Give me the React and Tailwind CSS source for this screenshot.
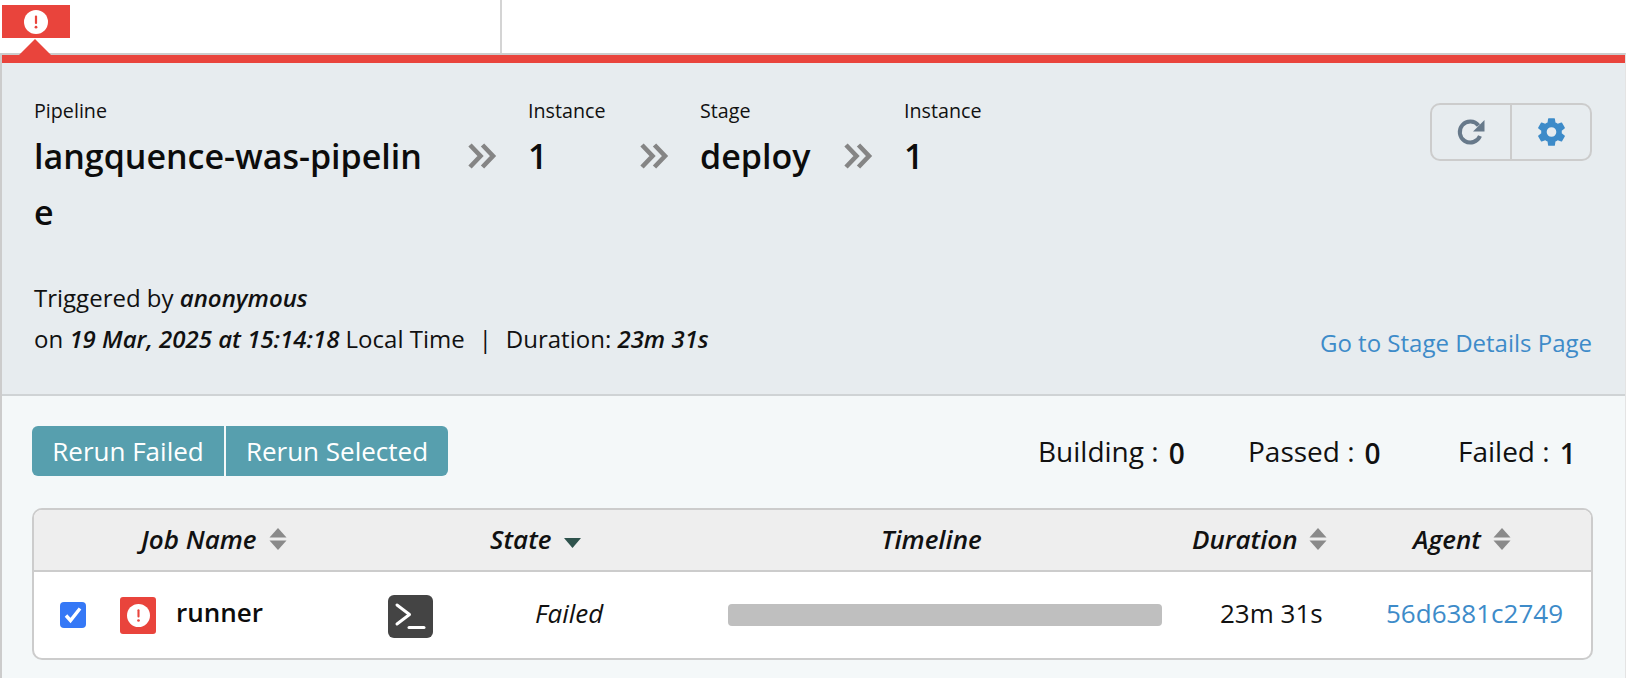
import React from "react";

const ErrorCircle = ({ size, fg = "#e9443c" }) => (
  <svg width={size} height={size} viewBox="0 0 24 24">
    <circle cx="12" cy="12" r="12" fill="#fff" />
    <rect x="10.9" y="5.5" width="2.2" height="8.500" rx="1" fill={fg} />
    <circle cx="12" cy="17.200" r="1.400" fill={fg} />
  </svg>
);

const Chevrons = () => (
  <svg width="30" height="28" viewBox="0 0 30 28" fill="none" stroke="#858585" strokeWidth="4.6">
    <path d="M3 3l10.500 11L3 25" />
    <path d="M15.500 3L26 14 15.500 25" />
  </svg>
);

const SortIcon = () => (
  <svg width="18" height="24" viewBox="0 0 18 24" fill="#8a8a8a">
    <path d="M9 1L17.500 10.500H.500z" />
    <path d="M.500 13.500h17L9 23z" />
  </svg>
);

const Crumb = ({ label, value, className }) => (
  <div className={className}>
    <div className="text-[19.700px] leading-[24px] text-[#111]">{label}</div>
    <div className="mt-[5px] text-[34px] leading-[56px] font-semibold text-[#0c0c0c] break-all">{value}</div>
  </div>
);

const Stat = ({ label, value, className }) => (
  <div className={`flex items-center ${className}`}>
    <span className="text-[28px]">{label} :</span>
    <span className="ml-[10px] mt-[3px] text-[28px] font-semibold">{value}</span>
  </div>
);

const App = () => {
  return (
    <div className="h-[678px] w-[1626px] overflow-hidden bg-white font-['Open_Sans',sans-serif] text-[#111]">
      {/* Top strip */}
      <div className="relative flex h-[53px] items-start">
        <div className="ml-[2px] mt-[5px] flex h-[33px] w-[68px] items-center justify-center bg-[#e9443c]">
          <ErrorCircle size={24} />
        </div>
        <div className="ml-[430px] h-[53px] w-[2px] bg-[#d4d4d4]"></div>
        <div className="absolute left-[19px] top-[39px] h-0 w-0 border-x-[16px] border-b-[16px] border-x-transparent border-b-[#e9443c]"></div>
      </div>

      {/* Panel */}
      <div className="h-[625px] border-l-2 border-r border-t-2 border-[#cccccc] border-r-[#e4e4e4]">
        <div className="h-[8px] bg-[#e9443c]"></div>

        <div className="flex h-[333px] flex-col border-b-2 border-[#cfd3d5] bg-[#e7ecef] pl-[32px] pr-[33px]">
          <div className="flex h-[214px] pt-[36px]">
            <Crumb label="Pipeline" value="langquence-was-pipeline" className="w-[390px]" />
            <div className="ml-[43px] mt-[43px] w-[61px]"><Chevrons /></div>
            <Crumb label="Instance" value="1" className="w-[111px]" />
            <div className="mt-[43px] w-[61px]"><Chevrons /></div>
            <Crumb label="Stage" value="deploy" className="w-[143px]" />
            <div className="mt-[43px] w-[61px]"><Chevrons /></div>
            <Crumb label="Instance" value="1" />
            <div className="ml-auto mt-[4px] flex h-[58px] w-[162px] rounded-[10px] border-2 border-[#cccccc]">
              <div className="flex w-[80px] items-center justify-center border-r-2 border-[#cccccc]">
                <svg width="28" height="28" viewBox="0 0 28 28" fill="none">
                  <path d="M23 18a10.500 10.500 0 1 1-1.500-10.500" stroke="#67798a" strokeWidth="4" />
                  <path d="M27.500 2v11.500H16z" fill="#67798a" />
                </svg>
              </div>
              <div className="flex flex-1 items-center justify-center">
                <svg width="33" height="34" viewBox="0 0 24 24">
                  <path
                    fill="#3d8bc9"
                    fillRule="evenodd"
                    d="M19.430 12.980c.040-.320.070-.640.070-.980s-.030-.660-.070-.980l2.110-1.650a.5.500 0 0 0 .120-.640l-2-3.460a.5.500 0 0 0-.610-.220l-2.490 1a7.300 7.300 0 0 0-1.690-.980l-.380-2.650A.49.490 0 0 0 14 2h-4a.49.490 0 0 0-.490.420l-.380 2.650c-.610.250-1.170.590-1.690.980l-2.490-1a.5.500 0 0 0-.610.220l-2 3.460a.49.490 0 0 0 .120.640l2.110 1.650c-.040.320-.070.650-.070.980s.030.660.070.980l-2.110 1.650a.5.500 0 0 0-.120.640l2 3.460c.120.220.390.300.610.220l2.490-1c.520.400 1.080.730 1.690.980l.380 2.650c.030.240.240.420.490.420h4c.250 0 .460-.180.490-.420l.380-2.650c.610-.250 1.170-.590 1.690-.980l2.490 1c.230.090.490 0 .610-.220l2-3.460a.5.500 0 0 0-.120-.640zM12 15.500a3.500 3.500 0 1 1 0-7 3.500 3.500 0 0 1 0 7z"
                  />
                </svg>
              </div>
            </div>
          </div>
          <div className="flex items-end justify-between text-[24px] leading-[41px] text-[#111]">
            <div>
              <div>Triggered by <b className="font-semibold italic">anonymous</b></div>
              <div>
                on <b className="font-semibold italic">19 Mar, 2025 at 15:14:18</b> Local Time
                <span className="mx-[14px]">|</span>
                Duration: <b className="font-semibold italic">23m 31s</b>
              </div>
            </div>
            <a className="text-[#3d8bc9] mb-[-4px]">Go to Stage Details Page</a>
          </div>
        </div>

        <div className="h-[282px] bg-[#f4f8f9] pl-[30px] pr-[32px] pt-[30px]">
          <div className="flex h-[50px] items-center">
            <div className="flex h-[50px] overflow-hidden rounded-[6px] text-[26px] text-white">
              <button className="w-[192px] bg-[#579fae]">Rerun Failed</button>
              <button className="ml-[2px] w-[222px] bg-[#579fae]">Rerun Selected</button>
            </div>
            <Stat label="Building" value="0" className="ml-[590px] w-[210px]" />
            <Stat label="Passed" value="0" className="w-[210px]" />
            <Stat label="Failed" value="1" />
          </div>

          <div className="mt-[32px] overflow-hidden rounded-[10px] border-2 border-[#cccccc] bg-white">
            <div className="flex h-[62px] items-center border-b-2 border-[#cccccc] bg-[#eeeeee] pb-[2px] text-[26px] font-semibold italic">
              <div className="flex w-[456px] items-center pl-[107px]">
                Job Name <span className="ml-[12px]"><SortIcon /></span>
              </div>
              <div className="flex w-[258px] items-center">
                State
                <svg className="ml-[12px] mt-[8px]" width="17" height="10" viewBox="0 0 17 10" fill="#2e524c"><path d="M0 0h17L8.500 10z" /></svg>
              </div>
              <div className="w-[444px] pl-[133px]">Timeline</div>
              <div className="flex w-[221px] items-center">
                Duration <span className="ml-[11px]"><SortIcon /></span>
              </div>
              <div className="flex items-center">
                Agent <span className="ml-[12px]"><SortIcon /></span>
              </div>
            </div>
            <div className="flex h-[86px] items-center text-[26px]">
              <div className="ml-[26px] flex h-[26px] w-[26px] items-center justify-center rounded-[4px] bg-[#3578f6]">
                <svg width="20" height="20" viewBox="0 0 20 20" fill="none" stroke="#fff" strokeWidth="3.400">
                  <path d="M3 10.500l4.500 5L17 3.500" />
                </svg>
              </div>
              <div className="ml-[34px] flex h-[37px] w-[36px] items-center justify-center rounded-[3px] bg-[#e9443c]">
                <ErrorCircle size={23} />
              </div>
              <div className="ml-[20px] mb-[6px] w-[212px] font-semibold text-[#0c0c0c]">runner</div>
              <div className="mt-[3px] flex h-[43px] w-[45px] items-center justify-center rounded-[6px] bg-[#444444]">
                <svg width="45" height="43" viewBox="0 0 45 43" fill="none" stroke="#fff" strokeWidth="3" strokeLinecap="round" strokeLinejoin="round">
                  <path d="M9 10l12.500 9.500L9 29" />
                  <path d="M21 32.500h15" />
                </svg>
              </div>
              <div className="ml-[102px] mb-[4px] w-[193px] italic">Failed</div>
              <div className="h-[22px] w-[434px] rounded-[4px] bg-[#bfbfbf]"></div>
              <div className="ml-[58px] mb-[4px] w-[166px]">23m 31s</div>
              <a className="mb-[4px] text-[#3d8bc9]">56d6381c2749</a>
            </div>
          </div>
        </div>
      </div>
    </div>
  );
};

export default App;
